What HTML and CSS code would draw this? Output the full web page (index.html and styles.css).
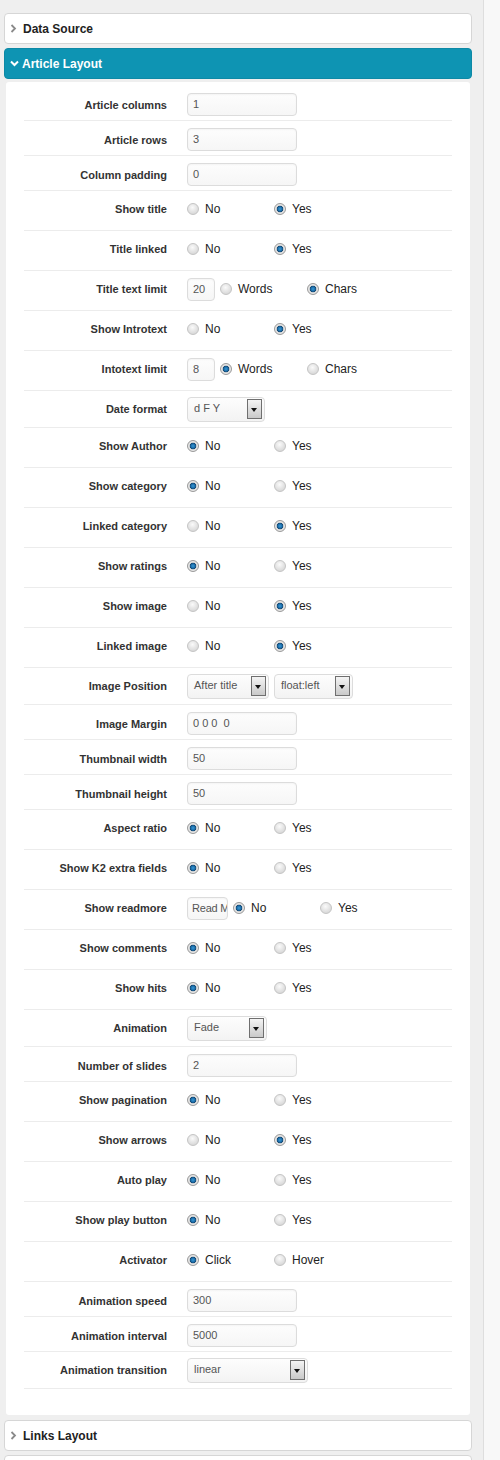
FILE: index.html
```html
<!DOCTYPE html>
<html>
<head>
<meta charset="utf-8">
<link rel="stylesheet" href="styles.css">
</head>
<body>
<div class="wrap">
  <div class="main">
    <div class="phead">
      <svg class="chev" width="7" height="9" viewBox="0 0 7 9"><polyline points="1.5,1 5,4.5 1.5,8" fill="none" stroke="#8a8a8a" stroke-width="1.8"/></svg>
      <span>Data Source</span>
    </div>
    <div class="phead active">
      <svg class="chev" width="9" height="7" viewBox="0 0 9 7"><polyline points="1,1.5 4.5,5 8,1.5" fill="none" stroke="#fff" stroke-width="2"/></svg>
      <span>Article Layout</span>
    </div>
    <div class="pbody">
      <div class="row in"><div class="lbl">Article columns</div><div class="txt w110">1</div></div>
      <div class="row in"><div class="lbl">Article rows</div><div class="txt w110">3</div></div>
      <div class="row in"><div class="lbl">Column padding</div><div class="txt w110">0</div></div>
      <div class="row"><div class="lbl">Show title</div><div class="opt"><span class="rd"></span>No</div><div class="opt"><span class="rd on"></span>Yes</div></div>
      <div class="row"><div class="lbl">Title linked</div><div class="opt"><span class="rd"></span>No</div><div class="opt"><span class="rd on"></span>Yes</div></div>
      <div class="row"><div class="lbl">Title text limit</div><div class="txt w28 mr">20</div><div class="opt"><span class="rd"></span>Words</div><div class="opt"><span class="rd on"></span>Chars</div></div>
      <div class="row"><div class="lbl">Show Introtext</div><div class="opt"><span class="rd"></span>No</div><div class="opt"><span class="rd on"></span>Yes</div></div>
      <div class="row"><div class="lbl">Intotext limit</div><div class="txt w28 mr">8</div><div class="opt"><span class="rd on"></span>Words</div><div class="opt"><span class="rd"></span>Chars</div></div>
      <div class="row sel"><div class="lbl">Date format</div><div class="select w78"><span>d F Y</span><span class="dd"></span></div></div>
      <div class="row"><div class="lbl">Show Author</div><div class="opt"><span class="rd on"></span>No</div><div class="opt"><span class="rd"></span>Yes</div></div>
      <div class="row"><div class="lbl">Show category</div><div class="opt"><span class="rd on"></span>No</div><div class="opt"><span class="rd"></span>Yes</div></div>
      <div class="row"><div class="lbl">Linked category</div><div class="opt"><span class="rd"></span>No</div><div class="opt"><span class="rd on"></span>Yes</div></div>
      <div class="row"><div class="lbl">Show ratings</div><div class="opt"><span class="rd on"></span>No</div><div class="opt"><span class="rd"></span>Yes</div></div>
      <div class="row"><div class="lbl">Show image</div><div class="opt"><span class="rd"></span>No</div><div class="opt"><span class="rd on"></span>Yes</div></div>
      <div class="row"><div class="lbl">Linked image</div><div class="opt"><span class="rd"></span>No</div><div class="opt"><span class="rd on"></span>Yes</div></div>
      <div class="row sel"><div class="lbl">Image Position</div><div class="select w82 mr"><span>After title</span><span class="dd"></span></div><div class="select w79"><span>float:left</span><span class="dd"></span></div></div>
      <div class="row in"><div class="lbl">Image Margin</div><div class="txt w110">0 0 0&nbsp; 0</div></div>
      <div class="row in"><div class="lbl">Thumbnail width</div><div class="txt w110">50</div></div>
      <div class="row in"><div class="lbl">Thumbnail height</div><div class="txt w110">50</div></div>
      <div class="row"><div class="lbl">Aspect ratio</div><div class="opt"><span class="rd on"></span>No</div><div class="opt"><span class="rd"></span>Yes</div></div>
      <div class="row"><div class="lbl">Show K2 extra fields</div><div class="opt"><span class="rd on"></span>No</div><div class="opt"><span class="rd"></span>Yes</div></div>
      <div class="row"><div class="lbl">Show readmore</div><div class="txt w41 mr tight">Read M</div><div class="opt"><span class="rd on"></span>No</div><div class="opt"><span class="rd"></span>Yes</div></div>
      <div class="row"><div class="lbl">Show comments</div><div class="opt"><span class="rd on"></span>No</div><div class="opt"><span class="rd"></span>Yes</div></div>
      <div class="row"><div class="lbl">Show hits</div><div class="opt"><span class="rd on"></span>No</div><div class="opt"><span class="rd"></span>Yes</div></div>
      <div class="row sel"><div class="lbl">Animation</div><div class="select w80"><span>Fade</span><span class="dd"></span></div></div>
      <div class="row in"><div class="lbl">Number of slides</div><div class="txt w110">2</div></div>
      <div class="row"><div class="lbl">Show pagination</div><div class="opt"><span class="rd on"></span>No</div><div class="opt"><span class="rd"></span>Yes</div></div>
      <div class="row"><div class="lbl">Show arrows</div><div class="opt"><span class="rd"></span>No</div><div class="opt"><span class="rd on"></span>Yes</div></div>
      <div class="row"><div class="lbl">Auto play</div><div class="opt"><span class="rd on"></span>No</div><div class="opt"><span class="rd"></span>Yes</div></div>
      <div class="row"><div class="lbl">Show play button</div><div class="opt"><span class="rd on"></span>No</div><div class="opt"><span class="rd"></span>Yes</div></div>
      <div class="row"><div class="lbl">Activator</div><div class="opt"><span class="rd on"></span>Click</div><div class="opt"><span class="rd"></span>Hover</div></div>
      <div class="row in"><div class="lbl">Animation speed</div><div class="txt w110">300</div></div>
      <div class="row in"><div class="lbl">Animation interval</div><div class="txt w110">5000</div></div>
      <div class="row sel"><div class="lbl">Animation transition</div><div class="select w121"><span>linear</span><span class="dd"></span></div></div>
    </div>
    <div class="phead links">
      <svg class="chev" width="7" height="9" viewBox="0 0 7 9"><polyline points="1.5,1 5,4.5 1.5,8" fill="none" stroke="#8a8a8a" stroke-width="1.8"/></svg>
      <span>Links Layout</span>
    </div>
    <div class="phead"></div>
  </div>
  <div class="rail"></div>
</div>
</body>
</html>
```
FILE: styles.css
```css
html, body {
  margin: 0;
  padding: 0;
}
body {
  background: #f8f8f8;
  font-family: Arial, "Liberation Sans", sans-serif;
  color: #333;
  height: 1460px;
  overflow: hidden;
}
.wrap {
  display: flex;
  height: 1460px;
}
.main {
  width: 468px;
  padding: 13px 11px 0 4px;
  background: #efefef;
  display: flex;
  flex-direction: column;
}
.rail {
  flex: 1;
  border-left: 1px solid #dedede;
  background: #f8f8f8;
}
.phead {
  box-sizing: border-box;
  height: 31px;
  flex: none;
  border: 1px solid #d6d6d6;
  border-radius: 4px;
  background: #fff;
  display: flex;
  align-items: center;
  padding-left: 5px;
  font-weight: bold;
  font-size: 12px;
  color: #222;
  margin-bottom: 4px;
}
.phead .chev {
  margin-right: 6px;
}
.phead.active {
  background: #0e94b3;
  border-color: #0d89a6;
  color: #fff;
  margin-bottom: 3px;
}
.phead.active .chev {
  margin-right: 3px;
}
.phead.links {
  margin-bottom: 4px;
}
.pbody {
  background: #fff;
  margin: 0 2px 5px 2px;
  padding: 4px 18px 26px 18px;
  border-radius: 3px;
}
.row {
  box-sizing: border-box;
  height: 40px;
  display: flex;
  align-items: center;
  border-bottom: 1px solid #ececec;
  padding-bottom: 3px;
}
.row.in {
  height: 35px;
  padding-bottom: 0;
  padding-top: 3px;
}
.row.sel {
  height: 37px;
  padding-bottom: 0;
  padding-top: 0;
}
.lbl {
  width: 143px;
  margin-right: 20px;
  text-align: right;
  font-weight: bold;
  font-size: 11px;
  color: #333;
  flex: none;
}
.txt {
  box-sizing: border-box;
  height: 23px;
  border: 1px solid #dcdcdc;
  border-radius: 4px;
  background: linear-gradient(#fdfdfd, #f6f6f6);
  box-shadow: inset 0 1px 2px rgba(0,0,0,0.04);
  font-size: 11px;
  color: #555;
  padding-left: 5px;
  line-height: 21px;
  white-space: nowrap;
  overflow: hidden;
  flex: none;
}
.txt.tight {
  padding-left: 4px;
  letter-spacing: -0.2px;
}
.w110 { width: 110px; }
.w28 { width: 28px; }
.w41 { width: 41px; }
.w78 { width: 78px; }
.w79 { width: 79px; }
.w80 { width: 80px; }
.w82 { width: 82px; }
.w121 { width: 121px; }
.mr { margin-right: 5px; }
.select {
  box-sizing: border-box;
  height: 25px;
  border: 1px solid #dcdcdc;
  border-radius: 4px;
  background: linear-gradient(#fdfdfd, #f3f3f3);
  display: flex;
  align-items: center;
  justify-content: space-between;
  padding: 0 2px 0 6px;
  font-size: 11px;
  color: #555;
  flex: none;
}
.select span:first-child {
  margin-top: -3px;
}
.dd {
  box-sizing: border-box;
  width: 15px;
  height: 20px;
  border: 1px solid #6f6f6f;
  background: linear-gradient(#f4f4f4, #c9c9c9);
  position: relative;
}
.dd::after {
  content: "";
  position: absolute;
  left: 3px;
  top: 8px;
  border-left: 3.5px solid transparent;
  border-right: 3.5px solid transparent;
  border-top: 4px solid #111;
}
.opt {
  width: 87px;
  display: flex;
  align-items: center;
  font-size: 12px;
  color: #222;
  flex: none;
}
.rd {
  box-sizing: border-box;
  width: 12px;
  height: 12px;
  border-radius: 50%;
  border: 1px solid #c4c4c4;
  background: radial-gradient(circle at 45% 35%, #fafafa 0, #e6e6e6 45%, #cfcfcf 100%);
  margin-right: 6px;
  flex: none;
}
.rd.on {
  border-color: #9a9a9a;
  background: radial-gradient(circle at 50% 50%, #3a9ad6 0, #1a6aa6 2.2px, #14466f 3px, #d8d8d8 3.6px, #e9e9e9 4.6px, #c2c2c2 6px);
}
```
